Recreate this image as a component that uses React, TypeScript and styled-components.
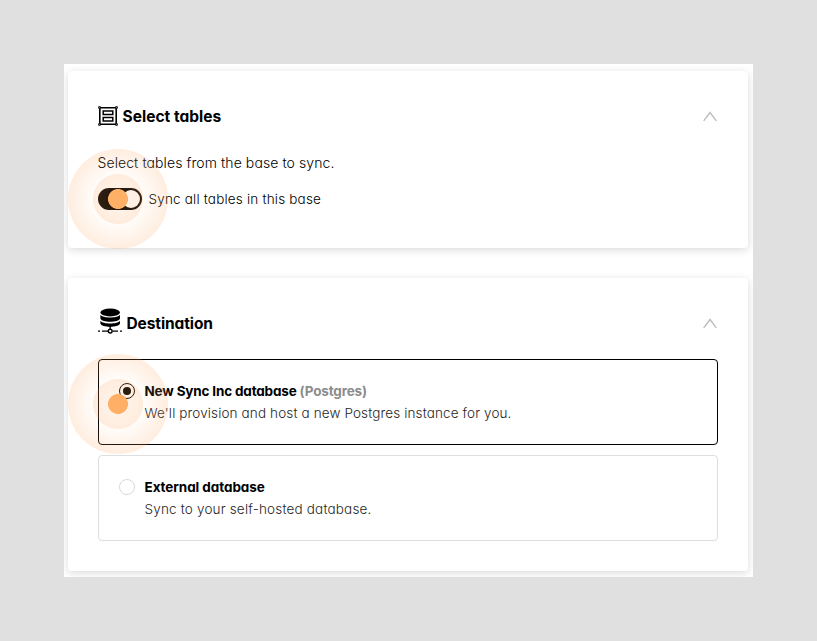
import React from "react";
import styled, { createGlobalStyle } from "styled-components";

const GlobalStyle = createGlobalStyle`
  * { box-sizing: border-box; }
  body {
    margin: 0;
    background: #e0e0e0;
    color: #000;
    font-family: Inter, "Open Sans", sans-serif;
    font-feature-settings: "cv11" 1, "ss03" 1;
  }
`;

const Page = styled.main`
  width: 817px;
  height: 641px;
  padding: 64px;
  background: #e0e0e0;
`;

const Panel = styled.div`
  width: 689px;
  height: 513px;
  padding: 7px 5px 6px 4px;
  background: #fff;
  overflow: hidden;
  display: flex;
  flex-direction: column;
  gap: 30px;
`;

const Card = styled.section<{ $height: number }>`
  position: relative;
  flex: none;
  height: ${(p) => p.$height}px;
  padding: 30px;
  border-radius: 4px;
  background: #fff;
  box-shadow: 0 2px 8px rgba(0, 0, 0, 0.15);
`;

const Header = styled.header`
  display: flex;
  align-items: center;
  height: 30px;
`;

const Title = styled.h2<{ $gap: number; $tracking: number }>`
  margin: 2px auto 0 ${(p) => p.$gap}px;
  font-size: 15.5px;
  line-height: 24px;
  font-weight: 650;
  letter-spacing: ${(p) => p.$tracking}px;
  white-space: nowrap;
`;

const Text = styled.span<{ $tracking: number; $color?: string; $size?: number }>`
  font-size: ${(p) => p.$size ?? 13.5}px;
  line-height: 22px;
  font-weight: 350;
  letter-spacing: ${(p) => p.$tracking}px;
  color: ${(p) => p.$color ?? "#000"};
  white-space: nowrap;
`;

const Strong = styled(Text)`
  font-weight: 650;
`;

const Muted = styled.span`
  color: #8c8c8c;
`;

const Intro = styled.div`
  display: flex;
  height: 22px;
  margin: 21px 0 0 -0.5px;
`;

const SwitchRow = styled.label`
  display: flex;
  align-items: center;
  gap: 6.5px;
  height: 22px;
  margin-top: 14px;
`;

const Switch = styled.span`
  display: flex;
  justify-content: flex-end;
  width: 44px;
  height: 22px;
  padding: 2px;
  border-radius: 11px;
  background: #000;
`;

const Knob = styled.span`
  width: 18px;
  height: 18px;
  border-radius: 50%;
  background: #fff;
`;

const Options = styled.div`
  display: flex;
  flex-direction: column;
  gap: 10px;
  margin-top: 21px;
`;

const Option = styled.label<{ $selected?: boolean }>`
  display: flex;
  gap: 9.5px;
  height: 86px;
  padding: 20px;
  border: 1px solid ${(p) => (p.$selected ? "#000" : "#dedede")};
  border-radius: 4px;
`;

const Radio = styled.span<{ $selected?: boolean }>`
  display: flex;
  align-items: center;
  justify-content: center;
  flex: none;
  width: 16px;
  height: 16px;
  margin-top: 3px;
  border: 1px solid ${(p) => (p.$selected ? "#000" : "#d9d9d9")};
  border-radius: 50%;
  &::after {
    content: "";
    width: 8px;
    height: 8px;
    border-radius: 50%;
    background: ${(p) => (p.$selected ? "#000" : "transparent")};
  }
`;

const OptionText = styled.span`
  display: flex;
  flex-direction: column;
`;

const Ripple = styled.span<{ $top: number }>`
  position: absolute;
  left: 0;
  top: ${(p) => p.$top}px;
  width: 100px;
  height: 100px;
  border-radius: 50%;
  pointer-events: none;
  background:
    radial-gradient(circle, #ffb066 0 9.6px, transparent 10.3px),
    radial-gradient(circle, rgba(255, 166, 95, 0.12) 0, rgba(255, 166, 95, 0.2) 24.6px, transparent 25.3px),
    radial-gradient(circle closest-side, rgba(255, 166, 95, 0) 40%, rgba(255, 166, 95, 0.2) 100%);
`;

const TablesIcon = () => (
  <svg width="20" height="20" viewBox="0 0 20 20" fill="none" stroke="#000">
    <path d="M2 1.8H18M2 18.2H18M1.8 2V18M18.2 2V18" strokeWidth="1.6" />
    <path d="M5.2 5.1H14.8V8.5H5.2ZM5.2 11.5H14.8V14.9H5.2Z" strokeWidth="1.5" />
    <g fill="#777" strokeWidth="1">
      <circle cx="1.5" cy="1.5" r="1.1" />
      <circle cx="18.5" cy="1.5" r="1.1" />
      <circle cx="1.5" cy="18.5" r="1.1" />
      <circle cx="18.5" cy="18.5" r="1.1" />
    </g>
  </svg>
);

const DatabaseIcon = styled.svg`
  flex: none;
  margin-top: -4px;
`;

const Chevron = () => (
  <svg width="16" height="12" viewBox="0 0 16 12" fill="none" stroke="#bdbdbd" strokeWidth="1.4">
    <path d="M1.7 10.8L8 2.5L14.3 10.8" />
  </svg>
);

export default function App() {
  return (
    <Page>
      <GlobalStyle />
      <Panel>
        <Card $height={177}>
          <Header>
            <TablesIcon />
            <Title $gap={4.5} $tracking={0.02}>Select tables</Title>
            <Chevron />
          </Header>
          <Intro>
            <Text $tracking={0.09} $size={14}>Select tables from the base to sync.</Text>
          </Intro>
          <SwitchRow>
            <Switch><Knob /></Switch>
            <Text $tracking={0.19}>Sync all tables in this base</Text>
          </SwitchRow>
          <Ripple $top={78} />
        </Card>
        <Card $height={293}>
          <Header>
            <DatabaseIcon width="24" height="26" viewBox="0 0 24 26">
              <ellipse cx="12.2" cy="4.5" rx="9.8" ry="3.9" />
              <path d="M2.4 6.8C5 10.5 19.4 10.5 22 6.8V10.5C20.8 14.8 3.6 14.8 2.4 10.5ZM2.4 12.8C5 16.5 19.4 16.5 22 12.8V15.6C20.8 20 3.6 20 2.4 15.6Z" />
              <path d="M12.2 18V21M0 23.2H2M4 23.2H10M14.4 23.2H20M22 23.2H24" stroke="#000" strokeWidth="1.3" />
              <circle cx="12.2" cy="23.1" r="1.9" fill="#fff" stroke="#000" strokeWidth="1.4" />
            </DatabaseIcon>
            <Title $gap={4.5} $tracking={-0.1}>Destination</Title>
            <Chevron />
          </Header>
          <Options>
            <Option $selected>
              <Radio $selected />
              <OptionText>
                <Strong $tracking={-0.17}>New Sync Inc database <Muted>(Postgres)</Muted></Strong>
                <Text $tracking={0.125} $color="#262626">We'll provision and host a new Postgres instance for you.</Text>
              </OptionText>
            </Option>
            <Option>
              <Radio />
              <OptionText>
                <Strong $tracking={-0.07}>External database</Strong>
                <Text $tracking={0.18} $color="#262626">Sync to your self-hosted database.</Text>
              </OptionText>
            </Option>
          </Options>
          <Ripple $top={76} />
        </Card>
      </Panel>
    </Page>
  );
}
